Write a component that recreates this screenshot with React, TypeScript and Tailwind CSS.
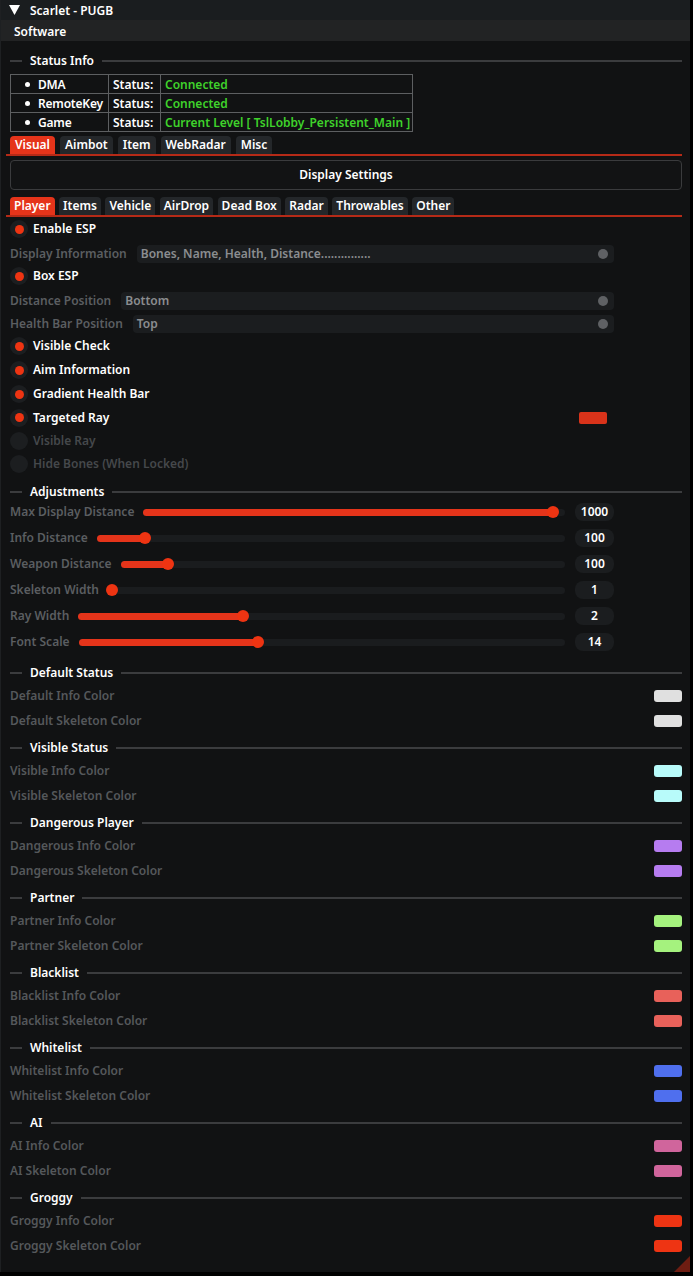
import React from "react";

const RED = "bg-[#e5341a]";

function Header({ title, className = "" }: { title: string; className?: string }) {
  return (
    <div className={`flex h-[14px] items-center ${className}`}>
      <span className="h-[2px] w-[12px] bg-[#3b3c3e]" />
      <span className="ml-[8px] text-[12px] font-semibold leading-[14px] text-white">{title}</span>
      <span className="ml-[8px] h-[2px] flex-1 bg-[#3b3c3e]" />
    </div>
  );
}

function Check({ label, on = true, h = "h-[24px]" }: { label: string; on?: boolean; h?: string }) {
  return (
    <div className={`flex items-center ${h}`}>
      <span className="grid h-[18px] w-[18px] place-items-center rounded-full bg-[#1c1e20]">
        {on && <span className="h-[9px] w-[9px] rounded-full bg-[#ee3412]" />}
      </span>
      <span className={`ml-[5px] text-[12px] font-semibold ${on ? "text-white" : "text-[#45484b]"}`}>{label}</span>
    </div>
  );
}

function Combo({ label, value, className = "" }: { label: string; value: string; className?: string }) {
  return (
    <div className={`flex h-[18px] w-[604px] items-center ${className}`}>
      <span className="text-[12px] font-semibold text-[#5b5e61]">{label}</span>
      <div className="ml-[10px] flex h-[18px] flex-1 items-center justify-between rounded-[4px] bg-[#1b1d1f] pl-[4px] pr-[6px]">
        <span className="text-[12px] font-semibold text-[#8b8d90]">{value}</span>
        <span className="h-[10px] w-[10px] rounded-full bg-[#5f6164]" />
      </div>
    </div>
  );
}

function Slider({ label, value, f }: { label: string; value: string; f: number }) {
  return (
    <div className="flex h-[26px] w-[604px] items-center">
      <span className="text-[12px] font-semibold text-[#5b5e61]">{label}</span>
      <div className="relative ml-[9px] h-[7px] flex-1 rounded-full bg-[#1a1c1e]">
        <div className={`absolute left-0 top-0 h-[7px] rounded-full ${RED}`} style={{ width: `${f * 100}%` }} />
        <span
          className="absolute top-1/2 h-[12px] w-[12px] -translate-x-1/2 -translate-y-1/2 rounded-full bg-[#ee3412]"
          style={{ left: `${f * 100}%` }}
        />
      </div>
      <span className="ml-[10px] grid h-[18px] w-[39px] place-items-center rounded-[8px] bg-[#1b1d1f] text-[12px] font-semibold text-white">
        {value}
      </span>
    </div>
  );
}

function ColorRow({ label, color }: { label: string; color: string }) {
  return (
    <div className="flex h-[25px] items-center justify-between">
      <span className="text-[12px] font-semibold text-[#55585b]">{label}</span>
      <span className={`h-[12px] w-[28px] rounded-[3px] ${color}`} />
    </div>
  );
}

function Tabs({ items, active, px, gap }: { items: string[]; active: number; px: string; gap: string }) {
  return (
    <div className="-ml-[4px] border-b-[2px] border-[#b52a17] pl-[4px]">
      <div className={`flex h-[18px] items-end ${gap}`}>
        {items.map((t, i) => (
          <span
            key={t}
            className={`flex h-[18px] items-center rounded-t-[4px] text-[12px] font-semibold text-white ${px} ${
              i === active ? "bg-[#e5341a]" : "bg-[#24272a]"
            }`}
          >
            {t}
          </span>
        ))}
      </div>
    </div>
  );
}

const statusRows = [
  { name: "DMA", value: "Connected" },
  { name: "RemoteKey", value: "Connected" },
  { name: "Game", value: "Current Level [ TslLobby_Persistent_Main ]" },
];

const colorSections = [
  { title: "Default Status", key: "Default", color: "bg-[#e0e0e0]" },
  { title: "Visible Status", key: "Visible", color: "bg-[#b8fbfa]" },
  { title: "Dangerous Player", key: "Dangerous", color: "bg-[#b67cf0]" },
  { title: "Partner", key: "Partner", color: "bg-[#a5f27e]" },
  { title: "Blacklist", key: "Blacklist", color: "bg-[#e8615a]" },
  { title: "Whitelist", key: "Whitelist", color: "bg-[#4f6fee]" },
  { title: "AI", key: "AI", color: "bg-[#d0659c]" },
  { title: "Groggy", key: "Groggy", color: "bg-[#ee3413]" },
];

export default function App() {
  return (
    <div className="h-[1276px] w-[693px] bg-black font-['Noto_Sans','Open_Sans',sans-serif]">
      <div className="relative h-[1272px] w-[690px] border-l border-[#1e2022] bg-[#111213]">
        {/* title bar */}
        <div className="flex h-[20px] items-center bg-[#1a1d1f] pl-[8px] pt-[2px]">
          <svg width="11" height="10" viewBox="0 0 11 10" className="-mt-[2px]">
            <path d="M0 0 L11 0 L5.5 10 Z" fill="#fff" />
          </svg>
          <span className="ml-[10px] text-[12px] font-semibold text-white">Scarlet - PUGB</span>
        </div>
        <div className="flex h-[21px] items-center bg-[#222324] pl-[13px] pt-[2px]">
          <span className="text-[12px] font-semibold text-white">Software</span>
        </div>

        <div className="pl-[9px] pr-[8px]">
          <Header title="Status Info" className="mt-[13px]" />

          <table className="mt-[6px] w-[403px] table-fixed border-collapse text-[12px] font-semibold">
            <colgroup>
              <col className="w-[98px]" />
              <col className="w-[52px]" />
              <col />
            </colgroup>
            <tbody>
              {statusRows.map((r) => (
                <tr key={r.name} className="h-[19px]">
                  <td className="whitespace-nowrap border border-[#5d5f61] pl-[14px] leading-[17px] tracking-[-0.2px] text-white">
                    <span className="mr-[8px] inline-block h-[5px] w-[5px] -translate-y-[2px] rounded-full bg-white" />
                    {r.name}
                  </td>
                  <td className="border border-[#5d5f61] pl-[4px] leading-[17px] text-white">Status:</td>
                  <td className="whitespace-nowrap border border-[#5d5f61] pl-[4px] leading-[17px] text-[#3fd22b]">{r.value}</td>
                </tr>
              ))}
            </tbody>
          </table>

          <div className="mt-[4px]">
            <Tabs items={["Visual", "Aimbot", "Item", "WebRadar", "Misc"]} active={0} px="px-[5px]" gap="gap-[5px]" />
          </div>

          <div className="mt-[4px] flex h-[30px] items-center justify-center rounded-[4px] border border-[#3a3b3d] bg-[#121314] text-[12px] font-semibold text-white">
            Display Settings
          </div>

          <div className="mt-[7px]">
            <Tabs
              items={["Player", "Items", "Vehicle", "AirDrop", "Dead Box", "Radar", "Throwables", "Other"]}
              active={0}
              px="px-[4px]"
              gap="gap-[4.5px]"
            />
          </div>

          <Check label="Enable ESP" />
          <Combo
            className="mt-[4px]"
            label="Display Information"
            value="Bones, Name, Health, Distance..............."
          />
          <div className="mt-[1px]">
            <Check label="Box ESP" />
          </div>
          <Combo className="mt-[4px]" label="Distance Position" value="Bottom" />
          <Combo className="mt-[5px]" label="Health Bar Position" value="Top" />
          <div className="mt-[1px]">
            <Check label="Visible Check" />
            <Check label="Aim Information" />
            <Check label="Gradient Health Bar" />
            <div className="flex w-[604px] items-center justify-between">
              <Check label="Targeted Ray" h="h-[23px]" />
              <span className="mr-[7px] h-[12px] w-[28px] rounded-[2px] bg-[#d9331a]" />
            </div>
            <Check label="Visible Ray" on={false} h="h-[23px]" />
            <Check label="Hide Bones (When Locked)" on={false} />
          </div>

          <Header title="Adjustments" className="mt-[9px]" />
          <Slider label="Max Display Distance" value="1000" f={0.972} />
          <Slider label="Info Distance" value="100" f={0.104} />
          <Slider label="Weapon Distance" value="100" f={0.106} />
          <Slider label="Skeleton Width" value="1" f={0.008} />
          <Slider label="Ray Width" value="2" f={0.338} />
          <Slider label="Font Scale" value="14" f={0.368} />

          <div className="pt-[3px]">
            {colorSections.map((s) => (
              <div key={s.title} className="mt-[8px]">
                <Header title={s.title} />
                <div className="mt-[3px]">
                  <ColorRow label={`${s.key} Info Color`} color={s.color} />
                  <ColorRow label={`${s.key} Skeleton Color`} color={s.color} />
                </div>
              </div>
            ))}
          </div>
        </div>

        {/* resize grip */}
        <svg className="absolute bottom-0 right-0" width="16" height="16" viewBox="0 0 16 16">
          <path d="M16 0 L16 16 L0 16 Z" fill="#6e1d12" />
        </svg>
      </div>
    </div>
  );
}
